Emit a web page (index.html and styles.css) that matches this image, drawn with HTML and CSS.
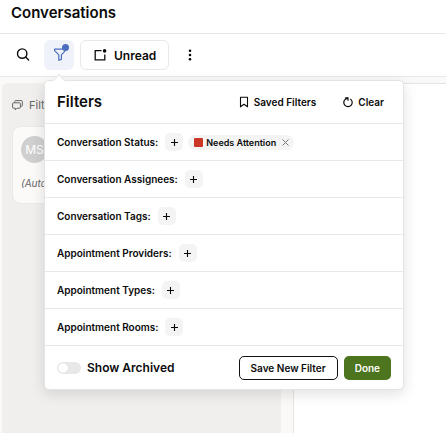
FILE: index.html
```html
<!DOCTYPE html>
<html lang="en">
<head>
<meta charset="utf-8">
<meta name="viewport" content="width=device-width, initial-scale=1">
<title>Conversations</title>
<link rel="stylesheet" href="styles.css">
</head>
<body>
<header class="page-header"><h1>Conversations</h1></header>
<div class="toolbar">
  <button class="icon-btn" type="button" aria-label="Search">
    <svg width="14" height="14" viewBox="0 0 14 14" fill="none" stroke="currentColor" stroke-width="1.4" stroke-linecap="round"><circle cx="6.2" cy="5.6" r="4.7"/><path d="M9.6 9l3 3"/></svg>
  </button>
  <div class="filter-anchor">
    <button class="icon-btn active" type="button" aria-label="Filters" aria-expanded="true">
      <svg width="18" height="18" viewBox="0 0 18 18"><path d="M3.600 5.200h10.800v1.500L10.400 10.900v4.500l-2.600.900v-5.400L3.600 6.700z" fill="none" stroke="#4a6fbd" stroke-width="1.2" stroke-linejoin="round"/><circle cx="14.500" cy="3.600" r="3.500" fill="#4a6fbd"/></svg>
    </button>
    <section class="popover" aria-label="Filters">
      <div class="popover-head">
        <h2>Filters</h2>
        <button class="link-btn" type="button">
          <svg width="10" height="12" viewBox="0 0 10 12" fill="none" stroke="currentColor" stroke-width="1.1" stroke-linejoin="round"><path d="M1.5 1.2h7v9.6L5 8.2l-3.500 2.600z"/></svg>
          Saved Filters
        </button>
        <button class="link-btn" type="button">
          <svg width="10" height="12" viewBox="0 0 10 12" fill="none" stroke="currentColor" stroke-width="1.200"><path d="M7.300 2.900A4.200 4.200 0 1 1 2.400 3.100L4.600 2.300M2.200 1.900H5V4.800"/></svg>
          Clear
        </button>
      </div>
      <div class="row"><span class="row-label">Conversation Status:</span><button class="add" type="button" aria-label="Add conversation status"><svg width="7" height="7" viewBox="0 0 7 7"><path d="M3.500 0v7M0 3.500h7" stroke="currentColor" stroke-width="1.100"/></svg></button>
        <span class="chip"><span class="swatch"></span>Needs Attention<button class="remove" type="button" aria-label="Remove Needs Attention"><svg width="7" height="7" viewBox="0 0 7 7"><path d="M.5.500l6 6M6.500.500l-6 6" stroke="currentColor" stroke-width="1"/></svg></button></span></div>
      <div class="row"><span class="row-label">Conversation Assignees:</span><button class="add" type="button" aria-label="Add conversation assignee"><svg width="7" height="7" viewBox="0 0 7 7"><path d="M3.500 0v7M0 3.500h7" stroke="currentColor" stroke-width="1.100"/></svg></button></div>
      <div class="row"><span class="row-label">Conversation Tags:</span><button class="add" type="button" aria-label="Add conversation tag"><svg width="7" height="7" viewBox="0 0 7 7"><path d="M3.500 0v7M0 3.500h7" stroke="currentColor" stroke-width="1.100"/></svg></button></div>
      <div class="row"><span class="row-label">Appointment Providers:</span><button class="add" type="button" aria-label="Add appointment provider"><svg width="7" height="7" viewBox="0 0 7 7"><path d="M3.500 0v7M0 3.500h7" stroke="currentColor" stroke-width="1.100"/></svg></button></div>
      <div class="row"><span class="row-label">Appointment Types:</span><button class="add" type="button" aria-label="Add appointment type"><svg width="7" height="7" viewBox="0 0 7 7"><path d="M3.500 0v7M0 3.500h7" stroke="currentColor" stroke-width="1.100"/></svg></button></div>
      <div class="row"><span class="row-label">Appointment Rooms:</span><button class="add" type="button" aria-label="Add appointment room"><svg width="7" height="7" viewBox="0 0 7 7"><path d="M3.500 0v7M0 3.500h7" stroke="currentColor" stroke-width="1.100"/></svg></button></div>
      <div class="popover-foot">
        <label class="toggle"><input type="checkbox" role="switch">Show Archived</label>
        <button class="btn outline" type="button">Save New Filter</button>
        <button class="btn primary" type="button">Done</button>
      </div>
    </section>
  </div>
  <button class="unread" type="button">
    <svg width="13" height="12" viewBox="0 0 13 12"><path d="M7.500 1.600H1.200v9.200h9.600V5.500" fill="none" stroke="currentColor" stroke-width="1.300"/><circle cx="10.600" cy="1.900" r="1.800" fill="currentColor"/></svg>
    Unread
  </button>
  <button class="icon-btn" type="button" aria-label="More options">
    <svg width="4" height="12" viewBox="0 0 4 12" fill="currentColor"><circle cx="2" cy="1.700" r="1.300"/><circle cx="2" cy="6" r="1.300"/><circle cx="2" cy="10.300" r="1.300"/></svg>
  </button>
</div>
<main class="content">
  <aside class="inbox">
    <div class="inbox-label">
      <svg width="11" height="11" viewBox="0 0 11 11" fill="none" stroke="currentColor" stroke-width="1" stroke-linejoin="round"><path d="M2.800 2.600V1.500Q2.800.600 3.700.600H9.400Q10.300.600 10.300 1.500V5.500Q10.300 6.400 9.400 6.400H8.600"/><path d="M1.500 2.800H7.500Q8.400 2.800 8.400 3.700V7.300Q8.400 8.200 7.500 8.200H5L3.300 9.900V8.200H1.500Q.600 8.200.600 7.300V3.700Q.600 2.800 1.500 2.800z"/></svg>
      Filt
    </div>
    <article class="card">
      <span class="avatar">MS</span>
      <p>(Auto</p>
    </article>
  </aside>
  <section class="thread" aria-label="Conversation"></section>
</main>
</body>
</html>
```

FILE: styles.css
```css
* { box-sizing: border-box; }
body {
  margin: 0;
  min-height: 100vh;
  display: flex;
  flex-direction: column;
  font-family: Inter, "Liberation Sans", sans-serif;
  font-size: 10px;
  color: #0b0b0b;
  background: #fff;
}
h1, h2, p { margin: 0; }
button { font: inherit; color: inherit; border: 0; padding: 0; background: none; cursor: pointer; }
svg { display: block; flex: none; }
.page-header { height: 34px; padding: 3px 11px; border-bottom: 1px solid #e8e8e8; }
h1 { font-size: 15px; line-height: 20px; font-weight: 600; }
.toolbar {
  display: flex;
  align-items: center;
  gap: 6px;
  height: 43px;
  padding: 0 8px;
  border-bottom: 1px solid #e8e8e8;
}
.icon-btn { width: 30px; height: 30px; display: grid; place-items: center; border-radius: 6px; }
.icon-btn.active { background: #eff3f9; padding: 0 0 4px 2px; }
.filter-anchor { position: relative; }
.unread {
  display: flex;
  align-items: center;
  gap: 7px;
  height: 30px;
  padding: 0 12px 0 13px;
  border: 1px solid #e8e8e8;
  border-radius: 6px;
  font-size: 12px;
  font-weight: 600;
}
.popover {
  position: absolute;
  z-index: 2;
  top: 40px;
  left: 0;
  width: calc(100vw - 86px);
  background: #fff;
  border: 1px solid #e4e4e4;
  border-radius: 5px;
  box-shadow: 0 4px 14px rgba(0, 0, 0, .12);
}
.popover::before {
  content: "";
  position: absolute;
  top: -5px;
  left: 9px;
  width: 9px;
  height: 9px;
  background: #fff;
  border: 1px solid #e4e4e4;
  border-width: 1px 0 0 1px;
  transform: rotate(45deg);
}
.popover-head { display: flex; align-items: center; gap: 27px; height: 43px; padding: 0 19px 0 12px; border-bottom: 1px solid #e8e8e8; }
h2 { flex: 1; font-size: 15px; line-height: 20px; font-weight: 600; }
.link-btn { display: flex; align-items: center; gap: 5px; font-weight: 600; }
.row { display: flex; align-items: center; height: 37px; padding: 0 12px; border-bottom: 1px solid #e8e8e8; }
.row-label { font-weight: 600; }
.add { width: 18px; height: 18px; margin-left: 7px; display: grid; place-items: center; border-radius: 5px; background: #f4f4f4; }
.chip { display: flex; align-items: center; height: 15px; margin-left: 5px; padding: 0 5px 0 6px; border-radius: 8px; background: #f4f4f4; font-size: 9px; font-weight: 600; }
.swatch { width: 9px; height: 9px; margin-right: 3px; border-radius: 1px; background: #cb3626; }
.remove { margin-left: 6px; color: #777; }
.popover-foot { display: flex; align-items: center; gap: 6px; height: 43px; padding: 0 12px; }
.toggle { flex: 1; display: flex; align-items: center; gap: 6px; font-size: 12px; font-weight: 600; }
.toggle input { appearance: none; width: 24px; height: 12px; margin: 0; border-radius: 6px; background: radial-gradient(circle at 6px 6px, #fff 4px, #e8e8e8 5px); }
.btn { height: 24px; padding: 0 11px; border-radius: 5px; font-weight: 600; }
.outline { border: 1px solid #111; }
.primary { color: #fff; background: #4d741e; }
.content { flex: 1; display: grid; grid-template-columns: 279fr 153fr; gap: 12px; padding: 6px 0 0 2px; background: #faf9f7; }
.inbox { padding: 15px 10px; border-radius: 6px 6px 0 0; background: #f0efed; }
.inbox-label { display: flex; align-items: center; gap: 6px; height: 14px; font-size: 11px; color: #666; }
.card { margin-top: 14px; padding: 9px 8px 12px; border: 1px solid #ebe9e7; border-radius: 8px; background: #fbfaf9; }
.avatar { display: grid; place-items: center; width: 27px; height: 27px; border-radius: 50%; background: #cfcfcf; color: #fff; font-size: 12px; }
.card p { margin-top: 13px; font-style: italic; line-height: 15px; color: #666; }
.thread { background: #fff; border: 1px solid #e6e4e2; border-width: 1px 0 0 1px; }
```
